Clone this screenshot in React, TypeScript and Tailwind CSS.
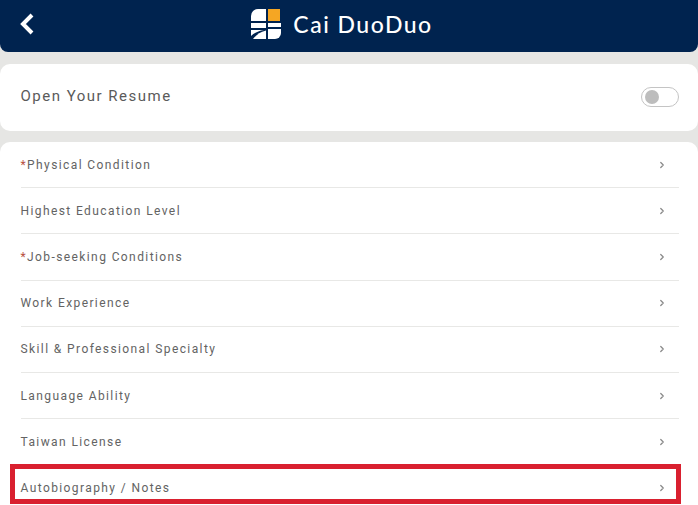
import { ChevronRight } from "lucide-react";

const rows = [
  { label: "Physical Condition", required: true },
  { label: "Highest Education Level" },
  { label: "Job-seeking Conditions", required: true },
  { label: "Work Experience" },
  { label: "Skill & Professional Specialty" },
  { label: "Language Ability" },
  { label: "Taiwan License" },
  { label: "Autobiography / Notes", highlight: true },
];

function Logo() {
  return (
    <svg width="30" height="31" viewBox="0 0 30 31" className="shrink-0">
      <path d="M7 0h8v12H0V7a7 7 0 0 1 7-7z" fill="#fff" />
      <rect x="17" y="0" width="12" height="12" fill="#f5a623" />
      <rect x="0" y="14" width="15" height="5" fill="#fff" />
      <rect x="17" y="14" width="13" height="4" fill="#fff" />
      <path d="M0 21h13C7 22 3 24 0 27z" fill="#fff" />
      <path d="M2 30c3-4 7-7 13-8.500V30z" fill="#fff" />
      <path d="M17 20h13v4a6 6 0 0 1-6 6h-7z" fill="#fff" />
    </svg>
  );
}

function Row({ label, required, highlight }: { label: string; required?: boolean; highlight?: boolean }) {
  return (
    <div className={`relative flex h-[46.2px] items-center justify-between ${highlight ? "" : "border-b border-[#e8e8e6]"}`}>
      <span className="text-[12px] tracking-[1.4px] text-[#636363]">
        {required && <span className="text-[#b8503f]">*</span>}
        {label}
      </span>
      <ChevronRight size={10} strokeWidth={3} className="mr-[12px] text-[#8a8a8a]" />
      {highlight && (
        <div className="absolute -left-[10.500px] -right-[2px] top-[-1.4px] h-[40px] border-[5px] border-[#d9202f]" />
      )}
    </div>
  );
}

export default function App() {
  return (
    <div className="h-[505px] w-[698px] overflow-hidden bg-[#e6e6e4] font-['Roboto',sans-serif]">
      <header className="relative flex h-[52px] items-center justify-center rounded-b-[8px] bg-[#00234f] pb-[4px] pr-[14px]">
        <svg width="16" height="24" viewBox="0 0 16 24" className="absolute left-[19px] top-[12px]">
          <path d="M13 3 4 12l9 9" fill="none" stroke="#fff" strokeWidth="4" />
        </svg>
        <div className="flex items-center gap-[12px]">
          <Logo />
          <span className="font-['Lato',sans-serif] text-[23px] font-medium tracking-[1.5px] text-white">Cai DuoDuo</span>
        </div>
      </header>

      <section className="mt-[12px] flex h-[67px] items-center justify-between rounded-[10px] bg-white pb-[2px] pl-[20.500px] pr-[19px]">
        <span className="text-[15px] tracking-[1.5px] text-[#5a5a5a]">Open Your Resume</span>
        <div className="flex h-[20px] w-[38px] items-center rounded-full border border-[#c4c4c4] bg-white pl-[3px]">
          <div className="h-[14px] w-[14px] rounded-full bg-[#bdbdbd]" />
        </div>
      </section>

      <section className="mt-[11px] rounded-t-[10px] bg-white pb-[2px] pl-[20.500px] pr-[19px]">
        {rows.map((r) => (
          <Row key={r.label} {...r} />
        ))}
      </section>
    </div>
  );
}
